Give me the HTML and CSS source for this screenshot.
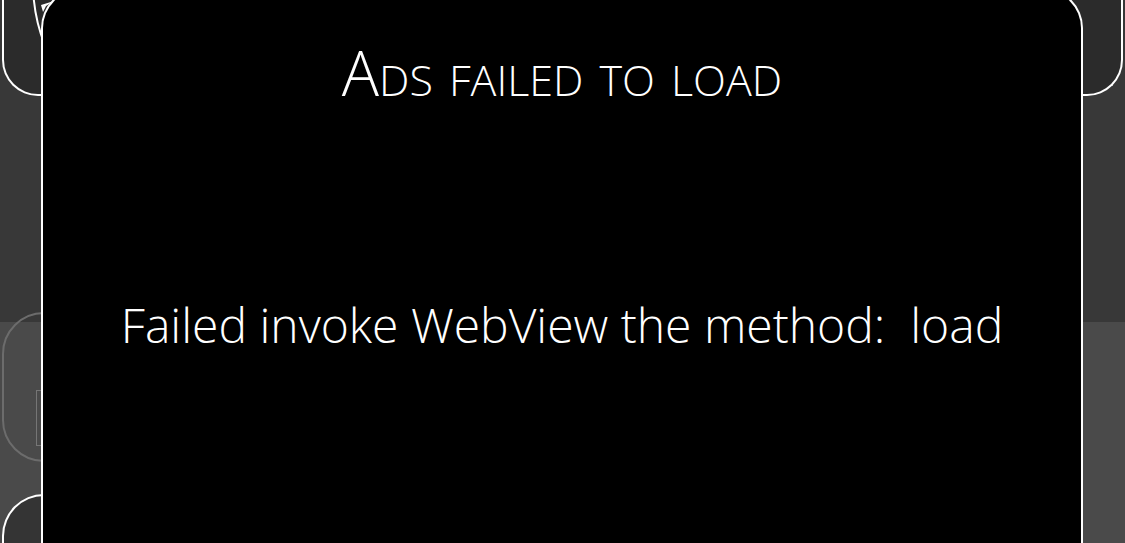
FILE: index.html
```html
<!DOCTYPE html>
<html>
<head>
<meta charset="utf-8">
<link rel="stylesheet" href="styles.css">
</head>
<body>
<div class="page">
  <div class="band">
    <div class="topcard"></div>
  </div>
  <div class="lower">
    <div class="card card-grey"><div class="thumb"></div></div>
    <div class="card card-white"></div>
  </div>
</div>
<div class="ring"></div>
<svg class="hook" width="30" height="20" viewBox="0 0 30 20"><path d="M9 5 L22 1 L14 6 L11 12 Z" fill="#fff"/></svg>
<div class="dialog">
  <h1 class="title">Ads failed to load</h1>
  <p class="message">Failed invoke WebView the method:  load</p>
</div>
</body>
</html>
```
FILE: styles.css
```css
html, body {
  margin: 0;
  padding: 0;
  width: 1125px;
  height: 543px;
  overflow: hidden;
  background: #4a4a4a;
}
body {
  position: relative;
}
.page {
  display: flex;
  flex-direction: column;
}
.band {
  height: 312px;
  background: #383838;
  padding: 0 2px;
}
.topcard {
  height: 96px;
  box-sizing: border-box;
  background: #2b2b2b;
  border: 2px solid #fff;
  border-top: none;
  border-radius: 0 0 36px 36px;
}
.lower {
  background: linear-gradient(#383838 0, #383838 10px, #4a4a4a 10px);
  display: flex;
  flex-direction: column;
  gap: 32px;
  padding-left: 2px;
}
.card {
  width: 900px;
  border-radius: 42px;
  box-sizing: border-box;
}
.card-grey {
  height: 150px;
  border: 2px solid #6c6c6c;
  padding: 76px 0 0 32px;
}
.thumb {
  width: 8px;
  height: 54px;
  border: 1.5px solid #767676;
  border-right: none;
}
.card-white {
  height: 49px;
  border: 2px solid #fff;
  border-bottom: none;
  border-radius: 42px 42px 0 0;
  background: #343434;
}
.ring {
  position: absolute;
  left: 32px;
  top: -187px;
  width: 340px;
  height: 340px;
  border: 2px solid #fff;
  border-radius: 50%;
  box-sizing: border-box;
}
.hook {
  position: absolute;
  left: 32px;
  top: 0;
}
.dialog {
  position: absolute;
  left: 41px;
  top: -12px;
  width: 1042px;
  height: 555px;
  box-sizing: border-box;
  background: #000;
  border: 2px solid #fff;
  border-bottom: none;
  border-radius: 40px 40px 0 0;
  display: flex;
  flex-direction: column;
  align-items: center;
  color: #fff;
  font-family: "Open Sans", "Noto Sans", sans-serif;
  font-weight: 300;
}
.title {
  margin: 50px 0 0 0;
  font-size: 62px;
  line-height: 64px;
  font-weight: 300;
  font-variant: small-caps;
  white-space: nowrap;
}
.message {
  margin: 193px 0 0 0;
  font-size: 48px;
  line-height: 56px;
  white-space: pre;
}
```
